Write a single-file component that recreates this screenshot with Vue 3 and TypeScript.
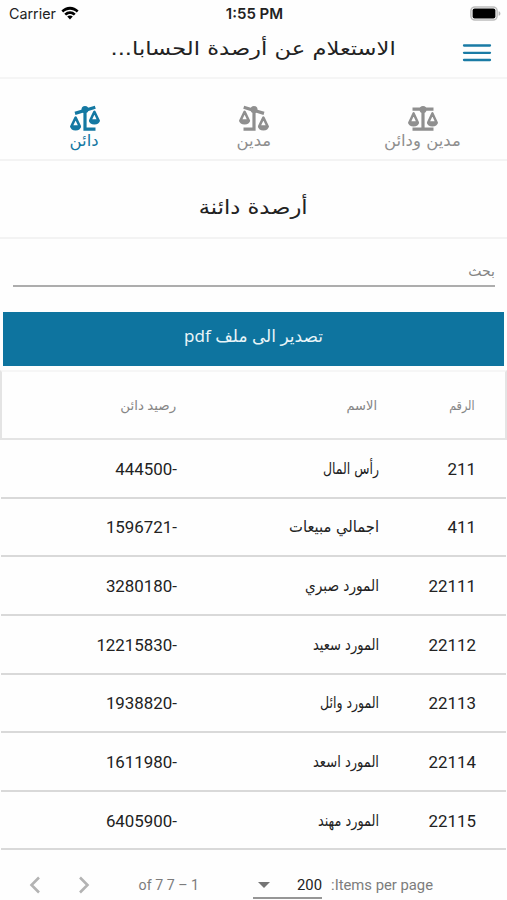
<script setup lang="ts">
interface Account {
  id: number
  name: string
  balance: number
  width: number
}

interface Tab {
  label: string
  tilt: 'level' | 'right' | 'left'
  active: boolean
}

const tabs: Tab[] = [
  { label: 'مدين ودائن', tilt: 'level', active: false },
  { label: 'مدين', tilt: 'left', active: false },
  { label: 'دائن', tilt: 'right', active: true },
]

const accounts: Account[] = [
  { id: 211, name: 'رأس المال', balance: -444500, width: 56 },
  { id: 411, name: 'اجمالي مبيعات', balance: -1596721, width: 90 },
  { id: 22111, name: 'المورد صبري', balance: -3280180, width: 74 },
  { id: 22112, name: 'المورد سعيد', balance: -12215830, width: 66 },
  { id: 22113, name: 'المورد وائل', balance: -1938820, width: 59 },
  { id: 22114, name: 'المورد اسعد', balance: -1611980, width: 66 },
  { id: 22115, name: 'المورد مهند', balance: -6405900, width: 61 },
]
</script>

<template>
  <div class="screen" dir="rtl">
    <div class="status" dir="ltr">
      <div class="carrier">
        <span>Carrier</span>
        <svg class="wifi" width="18" height="14" viewBox="0 0 18 14">
          <path d="M0.4 4.6C5.2-.6 12.8-.6 17.6 4.6L15.8 6.5C12 2.9 6 2.9 2.2 6.5Z" />
          <path d="M3.3 7.7C6.6 4.4 11.4 4.4 14.7 7.7L12.9 9.5C10.6 7.4 7.4 7.4 5.1 9.5Z" />
          <path d="M6.2 10.6C7.8 9.1 10.2 9.1 11.8 10.6L9 13.5Z" />
        </svg>
      </div>
      <span class="clock">1:55 PM</span>
      <svg class="battery" width="31" height="15" viewBox="0 0 31 15">
        <rect x=".9" y=".9" width="26.2" height="13.2" rx="4" fill="#fff" stroke="#bdbdbd" stroke-width="1.5" />
        <rect x="2.6" y="2.6" width="22.8" height="9.8" rx="2" fill="#000" />
        <path d="M28.6 5.2C31 5.8 31 9.2 28.6 9.8Z" fill="#b5b5b5" />
      </svg>
    </div>

    <header class="topbar">
      <svg class="menu" width="30" height="20" viewBox="0 0 30 20">
        <path d="M2 2.5H28M2 9.8H28M2 17H28" />
      </svg>
      <h1><span>الاستعلام عن أرصدة الحسابا...</span></h1>
    </header>

    <nav class="tabs">
      <div v-for="tab in tabs" :key="tab.label" class="tab" :class="[{ active: tab.active }, tab.tilt]">
        <svg class="scale" width="32" height="27" viewBox="0 0 32 27">
          <g v-if="tab.tilt === 'level'">
            <path d="M5.5 4.2H26.5M16 4V23.5M5.5 24.2H26.5" class="beam" />
            <circle cx="16" cy="4.4" r="3.5" />
            <path d="M6.6 8.4L2.4 17.6H10.8ZM25.4 8.4L21.2 17.6H29.6Z" class="pan" />
            <path d="M1.1 17.4H12.1Q11.4 21.4 6.6 21.4T1.1 17.4ZM19.9 17.4H30.9Q30.2 21.4 25.4 21.4T19.9 17.4Z" />
          </g>
          <g v-else>
            <path d="M6 8.4L26.3 2.2M16 5V24.2H26.5" class="beam" />
            <circle cx="16" cy="4.6" r="3.5" />
            <path d="M6.6 12.6L2.4 21.4H10.8ZM25.4 6.8L21.2 15.6H29.6Z" class="pan" />
            <path d="M1.1 21.2H12.1Q11.4 25.4 6.6 25.4T1.1 21.2ZM19.9 15.4H30.9Q30.2 19.4 25.4 19.4T19.9 15.4Z" />
          </g>
        </svg>
        <span>{{ tab.label }}</span>
      </div>
    </nav>

    <h2><span>أرصدة دائنة</span></h2>

    <div class="search">
      <div class="field"><span>بحث</span></div>
    </div>

    <button class="export"><span>تصدير الى ملف pdf</span></button>

    <div class="table">
      <div class="row head">
        <div class="id"><span>الرقم</span></div>
        <div class="name"><span>الاسم</span></div>
        <div class="balance"><span>رصيد دائن</span></div>
      </div>
      <div v-for="account in accounts" :key="account.id" class="row">
        <div class="id">{{ account.id }}</div>
        <div class="name">
          <svg height="34" :width="account.width" direction="rtl">
            <text :x="account.width" y="22" :textLength="account.width" lengthAdjust="spacingAndGlyphs">{{ account.name }}</text>
          </svg>
        </div>
        <div class="balance">{{ account.balance }}</div>
      </div>
    </div>

    <footer class="pager">
      <span class="label">Items per page:</span>
      <div class="select">
        <span>200</span>
        <svg width="12" height="6" viewBox="0 0 12 6"><path d="M0 0H12L6 6Z" fill="#757575" /></svg>
      </div>
      <span class="range">1 – 7 of 7</span>
      <div class="arrows">
        <svg width="12" height="18" viewBox="0 0 12 18"><path d="M2 1.5L9.5 9L2 16.5" /></svg>
        <svg width="12" height="18" viewBox="0 0 12 18"><path d="M10 1.5L2.5 9L10 16.5" /></svg>
      </div>
    </footer>
  </div>
</template>

<style>
body {
  background: #fff;
  overflow: hidden;
}
</style>

<style scoped>
.screen {
  width: 507px;
  height: 900px;
  overflow: hidden;
  background: #fefefe;
  color: #222;
  font-family: Roboto, 'DejaVu Sans', sans-serif;
  display: flex;
  flex-direction: column;
}
.screen > * {
  flex-shrink: 0;
  box-sizing: border-box;
}
.status {
  height: 27px;
  padding: 0 7px 0 9px;
  display: grid;
  grid-template-columns: 1fr auto 1fr;
  align-items: center;
  font-family: Inter, sans-serif;
}
.carrier {
  display: flex;
  align-items: center;
  gap: 5px;
  font-size: 14.3px;
}
.wifi {
  margin-top: -2px;
}
.clock {
  font-weight: 600;
  font-size: 15px;
}
.battery {
  justify-self: end;
  margin-right: -1px;
}
.topbar {
  height: 52px;
  border-bottom: 2px solid #f5f5f5;
  display: flex;
  padding-right: 15px;
}
.menu {
  margin-top: 16px;
  fill: none;
  stroke: #1a7ba5;
  stroke-width: 2.3;
  stroke-linecap: round;
}
h1 {
  margin: 8px 66px 0 0;
  font-size: 19px;
  line-height: 26px;
  font-weight: 400;
  white-space: nowrap;
  font-family: 'DejaVu Sans', sans-serif;
}
h1 span,
h2 span,
.tab span,
.head span {
  display: inline-block;
}
h1 span {
  transform: scaleX(1.19);
  transform-origin: right;
}
.tabs {
  height: 82px;
  border-bottom: 2px solid #f3f3f3;
  display: grid;
  grid-template-columns: repeat(3, 1fr);
}
.tab {
  display: flex;
  flex-direction: column;
  align-items: center;
  padding-top: 26px;
  color: #8f8f8f;
  font-family: 'DejaVu Sans', sans-serif;
  font-size: 16px;
  line-height: 18px;
}
.tab span {
  transform: scaleX(1.03);
}
.tab.active {
  color: #1478a2;
}
.scale {
  fill: currentColor;
}
.scale .beam {
  fill: none;
  stroke: currentColor;
  stroke-width: 3.2;
}
.scale .pan {
  fill: none;
  stroke: currentColor;
  stroke-width: 2.5;
  stroke-linejoin: round;
}
.left .scale {
  transform: scaleX(-1);
}
h2 {
  margin: 0;
  height: 78px;
  border-bottom: 2px solid #f3f3f3;
  text-align: center;
  font-size: 20px;
  line-height: 92px;
  font-weight: 400;
  font-family: 'DejaVu Sans', sans-serif;
}
h2 span {
  transform: scaleX(1.13);
}
.search {
  height: 73px;
  padding: 20px 12px 0 13px;
}
.field {
  height: 26px;
  border-bottom: 2px solid #adadad;
  color: #858585;
  font-size: 14px;
  line-height: 24px;
}
.export {
  height: 54px;
  margin: 0 3px;
  padding: 0 0 7px;
  border: 0;
  background: #0e749f;
  color: #e8f4f8;
  font-family: 'Noto Sans', 'DejaVu Sans', sans-serif;
  font-size: 17px;
}
.table {
  margin-top: 4px;
}
.row {
  height: 58.65px;
  box-sizing: border-box;
  border-bottom: 2px solid #d9d9d9;
  margin: 0 1px;
  padding: 1px 30px 0 0;
  display: grid;
  grid-template-columns: 96px 202px 1fr;
  align-items: center;
  font-size: 16.9px;
}
.row .name,
.row .balance {
  margin-right: 1px;
}
.head {
  height: 70px;
  margin: 0;
  border: 2px solid #e4e4e4;
  border-top-color: #f6f6f6;
  color: #858585;
  font-size: 13px;
}
.head .id span {
  transform: scaleX(.86);
  transform-origin: right;
}
.head .name span {
  transform: translateX(-1px);
}
.head .balance span {
  transform: scaleX(1.03);
  transform-origin: right;
}
.name svg {
  display: block;
  overflow: visible;
  fill: #222;
  font-family: 'DejaVu Sans', sans-serif;
  font-size: 16px;
}
.pager {
  height: 50px;
  padding: 20px 74px 0 29px;
  display: flex;
  align-items: center;
  color: #7c7c7c;
  font-size: 14.8px;
  white-space: nowrap;
}
.label {
  width: 102px;
  flex: none;
}
.select {
  width: 69px;
  height: 26px;
  flex: none;
  box-sizing: border-box;
  margin: 2px 9px 0 0;
  display: flex;
  align-items: center;
  justify-content: space-between;
  padding-left: 5px;
  border-bottom: 2px solid #969696;
  color: #222;
}
.range {
  margin-right: 54px;
  font-size: 14.2px;
}
.arrows {
  margin-right: auto;
  display: flex;
  gap: 37px;
}
.arrows svg {
  fill: none;
  stroke: #b3b3b3;
  stroke-width: 2.6;
}
</style>
